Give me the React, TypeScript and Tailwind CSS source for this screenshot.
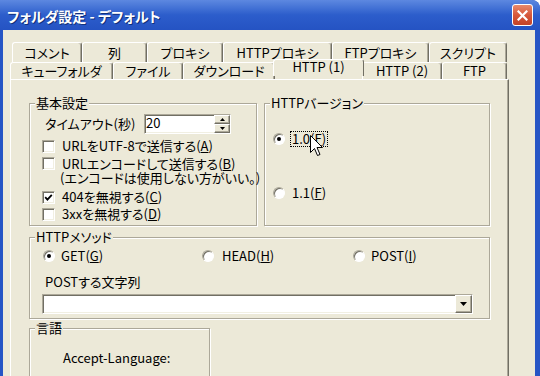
import React from "react";

const FONT = "font-['Noto_Sans_CJK_JP','Noto_Sans_CJK_SC',sans-serif] [font-feature-settings:'palt']";

function Check({ checked = false }: { checked?: boolean }) {
  return (
    <span className="w-[13px] h-[13px] shrink-0 bg-white border border-t-[#aca899] border-l-[#aca899] border-r-white border-b-white shadow-[inset_1px_1px_0_#716f64,inset_-1px_-1px_0_#f1efe2] flex items-center justify-center">
      {checked && (
        <svg width="9" height="9" viewBox="0 0 9 9">
          <path d="M1.2 4.2 L3.4 6.6 L7.8 1.8" stroke="#000" strokeWidth="1.8" fill="none" />
        </svg>
      )}
    </span>
  );
}

function Radio({ on = false }: { on?: boolean }) {
  return (
    <span className="w-[12px] h-[12px] shrink-0 rounded-full bg-white border border-t-[#aca899] border-l-[#aca899] border-r-white border-b-white shadow-[inset_1px_1px_0_#716f64] flex items-center justify-center">
      {on && <span className="w-[4px] h-[4px] rounded-full bg-black" />}
    </span>
  );
}

function TriUp() {
  return (
    <svg width="5" height="3" viewBox="0 0 5 3">
      <path d="M2.5 0 L5 3 L0 3 Z" fill="#000" />
    </svg>
  );
}
function TriDown({ w = 5, h = 3 }: { w?: number; h?: number }) {
  return (
    <svg width={w} height={h} viewBox={`0 0 ${w} ${h}`}>
      <path d={`M0 0 L${w} 0 L${w / 2} ${h} Z`} fill="#000" />
    </svg>
  );
}

const RAISED =
  "bg-[#ece9d8] border border-t-white border-l-white border-r-[#716f64] border-b-[#716f64] shadow-[inset_-1px_-1px_0_#aca899]";
const SUNKEN =
  "bg-white border border-t-[#aca899] border-l-[#aca899] border-r-white border-b-white shadow-[inset_1px_1px_0_#716f64,inset_-1px_-1px_0_#f1efe2]";
const GROUP =
  "border border-[#aca899] shadow-[inset_1px_1px_0_#fff,1px_1px_0_#fff]";
const LEGEND =
  "-mt-[8px] ml-[5px] px-[1px] w-fit bg-[#ece9d8] h-[14px] leading-[14px] whitespace-nowrap";
const TAB =
  "flex items-center justify-center h-full shrink-0 whitespace-nowrap bg-[#ece9d8] border-t border-l border-white border-r border-r-[#716f64] rounded-t-[3px] shadow-[inset_-1px_0_0_#aca899]";

function Cursor() {
  return (
    <svg width="14" height="23" viewBox="0 0 14 23" className="absolute left-[37px] top-[4px]">
      <path
        d="M0.5 0.5 L0.5 17.5 L4.5 13.5 L7.5 20.5 L10 19.5 L7 12.5 L12.5 12.5 Z"
        fill="#fff"
        stroke="#000"
        strokeWidth="1"
        strokeLinejoin="miter"
      />
    </svg>
  );
}

export default function App() {
  return (
    <div className={`w-[540px] h-[376px] overflow-hidden flex flex-col bg-[#2655c5] rounded-tr-[8px] text-[13px] leading-[14px] text-black ${FONT}`}>
      {/* Title bar */}
      <div className="h-[30px] shrink-0 flex items-center justify-between pl-[7px] pr-[7px] rounded-tr-[8px] bg-gradient-to-b from-[#5d88e0] via-[#2c5dcb] to-[#2553c3]">
        <span className="text-white font-bold text-[14px] leading-[16px] pt-[2px] [text-shadow:1px_1px_0_#10307a]">
          フォルダ設定 - デフォルト
        </span>
        <div className="w-[21px] h-[22px] rounded-[3px] border border-white bg-gradient-to-b from-[#e8896a] via-[#d6583b] to-[#c44327] flex items-center justify-center">
          <svg width="11" height="11" viewBox="0 0 11 11">
            <path d="M1.5 1.5 L9.5 9.5 M9.5 1.5 L1.5 9.5" stroke="#fff" strokeWidth="2.2" strokeLinecap="square" />
          </svg>
        </div>
      </div>

      {/* Body */}
      <div className="flex-1 ml-[3px] mr-[5px] bg-[#ece9d8] pt-[12px] pl-[7px] overflow-hidden">
        <div className="w-[499px]">
          {/* Tab row 1 (back) */}
          <div className="flex h-[20px] pl-[2px]">
            <div className={`${TAB} w-[70px]`}>コメント</div>
            <div className={`${TAB} w-[65px]`}>列</div>
            <div className={`${TAB} w-[76px]`}>プロキシ</div>
            <div className={`${TAB} w-[109px]`}>HTTPプロキシ</div>
            <div className={`${TAB} w-[97px]`}>FTPプロキシ</div>
            <div className={`${TAB} w-[78px]`}>スクリプト</div>
          </div>
          {/* Tab row 2 (front) */}
          <div className="flex h-[17px]">
            <div className={`${TAB} w-[103px]`}>キューフォルダ</div>
            <div className={`${TAB} w-[70px]`}>ファイル</div>
            <div className={`${TAB} w-[92px]`}>ダウンロード</div>
            <div className={`${TAB} relative z-10 w-[91px] h-[21px] -mt-[3px] -mx-[2px] pb-[3px] shadow-none`}>HTTP (1)</div>
            <div className={`${TAB} w-[80px]`}>HTTP (2)</div>
            <div className={`${TAB} w-[65px]`}>FTP</div>
          </div>

          {/* Panel */}
          <div className="h-[310px] border-l border-t border-white border-r border-r-[#716f64] shadow-[inset_-1px_0_0_#aca899] pt-[23px] pl-[18px]">
            <div className="flex gap-[7px]">
              {/* 基本設定 */}
              <div className={`${GROUP} w-[228px] h-[123px]`}>
                <div className={LEGEND}>基本設定</div>
                <div className="pl-[12px]">
                  <div className="mt-[4px] h-[20px] flex items-center">
                    <span className="w-[102px] pl-[3px] whitespace-nowrap">タイムアウト(秒)</span>
                    <div className={`${SUNKEN} w-[87px] h-[20px] flex`}>
                      <span className="flex-1 pl-[1px] leading-[16px]">20</span>
                      <div className="w-[16px] flex flex-col p-0">
                        <div className={`${RAISED} flex-1 flex items-center justify-center`}>
                          <TriUp />
                        </div>
                        <div className={`${RAISED} flex-1 flex items-center justify-center`}>
                          <TriDown />
                        </div>
                      </div>
                    </div>
                  </div>
                  <div className="mt-[5px] h-[14px] flex items-center gap-[7px]">
                    <Check />
                    <span className="whitespace-nowrap">URLをUTF-8で送信する(<u>A</u>)</span>
                  </div>
                  <div className="mt-[4px] flex items-start gap-[7px]">
                    <Check />
                    <span className="leading-[14px] whitespace-nowrap">
                      URLエンコードして送信する(<u>B</u>)
                      <span className="block -ml-[2px]">(エンコードは使用しない方がいい。)</span>
                    </span>
                  </div>
                  <div className="mt-[5px] h-[14px] flex items-center gap-[7px]">
                    <Check checked />
                    <span className="whitespace-nowrap">404を無視する(<u>C</u>)</span>
                  </div>
                  <div className="mt-[3px] h-[14px] flex items-center gap-[7px]">
                    <Check />
                    <span className="whitespace-nowrap">3xxを無視する(<u>D</u>)</span>
                  </div>
                </div>
              </div>

              {/* HTTPバージョン */}
              <div className={`${GROUP} w-[226px] h-[123px]`}>
                <div className={LEGEND}>HTTPバージョン</div>
                <div className="pl-[8px]">
                  <div className="relative mt-[21px] h-[16px] flex items-center">
                    <Radio on />
                    <span className="ml-[5px] px-[1px] border border-dotted border-black leading-[14px]">
                      1.0(<u>F</u>)
                    </span>
                    <Cursor />
                  </div>
                  <div className="mt-[38px] h-[16px] flex items-center">
                    <Radio />
                    <span className="ml-[6px] px-[1px]">
                      1.1(<u>F</u>)
                    </span>
                  </div>
                </div>
              </div>
            </div>

            {/* HTTPメソッド */}
            <div className={`${GROUP} mt-[11px] w-[461px] h-[82px]`}>
              <div className={LEGEND}>HTTPメソッド</div>
              <div className="pl-[13px]">
                <div className="mt-[4px] h-[16px] flex items-center">
                  <div className="w-[159px] flex items-center gap-[6px]">
                    <Radio on />
                    <span>GET(<u>G</u>)</span>
                  </div>
                  <div className="w-[151px] flex items-center gap-[8px]">
                    <Radio />
                    <span>HEAD(<u>H</u>)</span>
                  </div>
                  <div className="flex items-center gap-[6px]">
                    <Radio />
                    <span>POST(<u>I</u>)</span>
                  </div>
                </div>
                <div className="mt-[11px] h-[14px] pl-[2px] whitespace-nowrap">POSTする文字列</div>
                <div className={`${SUNKEN} mt-[5px] -ml-[1px] w-[431px] h-[20px] flex`}>
                  <span className="flex-1" />
                  <div className={`${RAISED} w-[17px] h-full flex items-center justify-center`}>
                    <TriDown w={7} h={4} />
                  </div>
                </div>
              </div>
            </div>

            {/* 言語 */}
            <div className={`${GROUP} mt-[9px] w-[181px] h-[60px]`}>
              <div className={LEGEND}>言語</div>
              <div className="mt-[16px] pl-[33px] h-[14px] whitespace-nowrap">Accept-Language:</div>
            </div>
          </div>
        </div>
      </div>
    </div>
  );
}
